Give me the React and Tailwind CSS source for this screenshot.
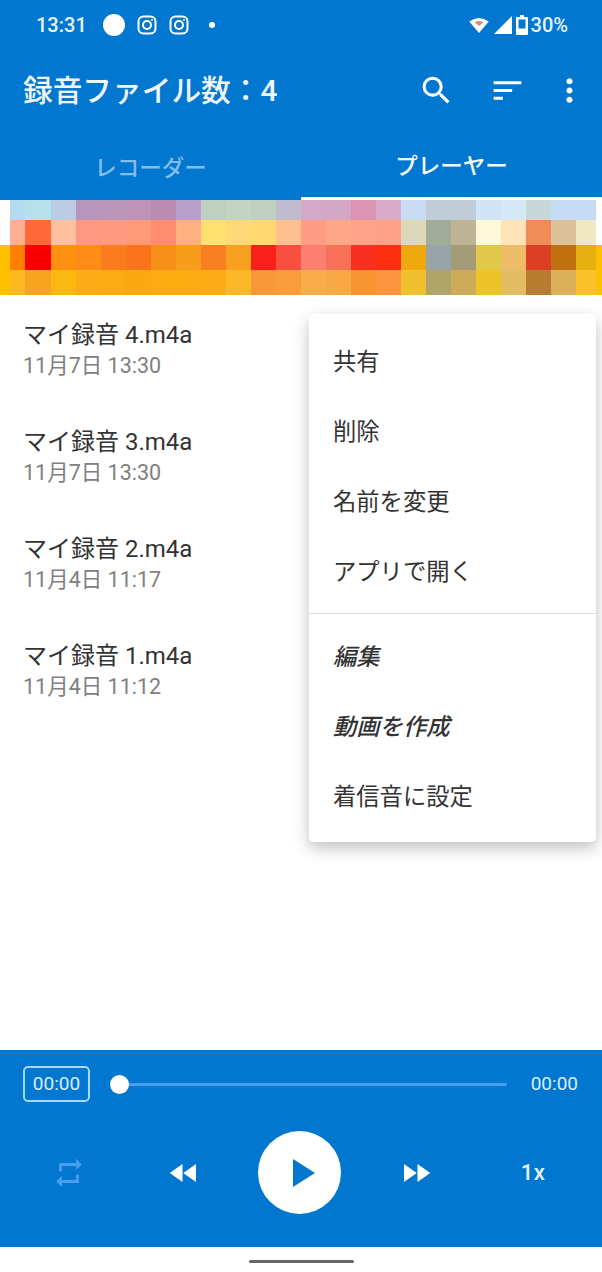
import React from "react";
import { MdSearch, MdSort, MdMoreVert, MdRepeat, MdFastRewind, MdFastForward, MdPlayArrow } from "react-icons/md";

const widths = [10,15,26,25,25,25,25,25,25,25,25,25,25,25,25,25,25,25,25,25,25,25,25,25,20,6];
const rows = [
  ["#ffffff","#b4dcf0","#b6e0ec","#bdcce6","#b795bd","#bb96bb","#bd94b7","#b98bb3","#b8a0c8","#c0d0c0","#c2d4c2","#c0d0be","#c0bcd0","#d4a8c8","#d4a8c4","#dc94b4","#d8acc8","#c8dcf4","#c0ccd8","#c0ccd8","#d0e4f8","#d4e8f8","#c8d8d8","#c4dcf4","#c4dcf4","#ffffff"],
  ["#ffffff","#ffb090","#ff6838","#ffc0a0","#ff9880","#ff9a80","#ff9a78","#ff8c70","#ffb080","#ffe070","#ffd878","#ffd870","#ffc090","#ff9c84","#ffa888","#ffa488","#ffa088","#dcd8b8","#a0ac98","#bcb494","#fff8d8","#ffe4b8","#f08c58","#dcc098","#f0e8c0","#ffffff"],
  ["#ffc000","#ff8000","#f80000","#ff9010","#ff8c18","#fb7c1c","#fb741c","#f79018","#f89c1c","#f88020","#f8a020","#f82018","#f85040","#fc8070","#f87058","#f83020","#fc3010","#f0a810","#98a4a8","#a49c78","#e0c848","#ecbc68","#dc4024","#c07010","#e4b010","#ffc000"],
  ["#ffc000","#fdb820","#f8a420","#fcb810","#fcac14","#fcac10","#fca810","#fcac10","#fcac10","#fcac14","#fcb828","#f8983a","#f89c3c","#f8ac4c","#f8a844","#f89430","#fc9440","#f0c030","#b0a468","#ccac58","#ecc428","#e4bc64","#b87c30","#dcb058","#fcc028","#ffc000"],
];
const rowHeights = [20,25,25,25];

const files = [
  ["マイ録音 4.m4a","11月7日 13:30"],
  ["マイ録音 3.m4a","11月7日 13:30"],
  ["マイ録音 2.m4a","11月4日 11:17"],
  ["マイ録音 1.m4a","11月4日 11:12"],
];

function Insta() {
  return (
    <svg width="20" height="20" viewBox="0 0 20 20" fill="none" stroke="white" strokeWidth="2">
      <rect x="1.5" y="1.5" width="17" height="17" rx="5" />
      <circle cx="10" cy="10" r="4" />
      <circle cx="15" cy="5" r="0.6" fill="white" strokeWidth="0.8" />
    </svg>
  );
}

function MenuItem({ children, italic }) {
  return (
    <div className={"h-[70px] flex items-center pl-6 text-[23.3px] text-[#333333] " + (italic ? "italic font-medium" : "")}>
      {children}
    </div>
  );
}

export default function App() {
  return (
    <div className="relative w-[602px] h-[1272px] bg-white flex flex-col overflow-hidden font-['Roboto','Noto_Sans_CJK_JP',sans-serif]">
      <div className="bg-[#0277cf] h-[200px] shrink-0 flex flex-col text-white">
        <div className="h-[50px] flex items-center pl-9 pr-[34px]">
          <span className="text-[20px] font-medium text-[#e6f2fb]">13:31</span>
          <span className="ml-4 w-[22px] h-[22px] rounded-full bg-white"></span>
          <span className="ml-3"><Insta /></span>
          <span className="ml-3"><Insta /></span>
          <span className="ml-5 w-[6px] h-[6px] rounded-full bg-white"></span>
          <div className="ml-auto flex items-center">
            <svg width="20" height="16" viewBox="0 0 22 18">
              <path d="M11 18 L0 5 Q11 -3 22 5 Z" fill="white" />
              <path d="M11 10 L6 6 Q11 3 16 6 Z" fill="#c98f8f" />
            </svg>
            <svg width="20" height="18" viewBox="0 0 18 18" className="ml-[4px]">
              <path d="M18 0 V18 H0 Z" fill="white" />
            </svg>
            <svg width="12" height="20" viewBox="0 0 12 20" className="ml-[3px]">
              <path d="M4 0 H8 V2 H11 Q12 2 12 3 V19 Q12 20 11 20 H1 Q0 20 0 19 V3 Q0 2 1 2 H4 Z" fill="white" />
              <rect x="2.5" y="4.5" width="7" height="9" fill="#0277cf" />
            </svg>
            <span className="ml-[3px] text-[20px] font-medium text-[#e6f2fb]">30%</span>
          </div>
        </div>
        <div className="h-[80px] flex items-center pl-[23px]">
          <span className="mt-[3px] text-[29.7px] font-medium text-[#eef6fc] whitespace-nowrap">録音ファイル数：4</span>
          <div className="ml-auto flex items-center">
            <MdSearch size={37} className="mr-[34px]" />
            <MdSort size={37} className="mr-[25px]" />
            <MdMoreVert size={37} className="mr-[14px]" />
          </div>
        </div>
        <div className="flex-1 grid grid-cols-2 text-[22.5px] font-medium">
          <div className="flex items-center justify-center pt-[7px] text-[#84bdeb]">レコーダー</div>
          <div className="flex items-center justify-center pt-[7px] border-b-[3px] border-white text-[#f5fafe]">プレーヤー</div>
        </div>
      </div>

      <div className="shrink-0 flex flex-col">
        {rows.map((row, r) => (
          <div key={r} className="flex" style={{ height: rowHeights[r] }}>
            {row.map((c, i) => (
              <div key={i} style={{ width: widths[i], background: c }} />
            ))}
          </div>
        ))}
      </div>

      <div className="flex-1 flex flex-col pt-[22px] pl-[23px]">
        {files.map(([name, date]) => (
          <div key={name} className="h-[107px] flex flex-col">
            <span className="text-[24px] leading-[36px] text-[#333333]">{name}</span>
            <span className="text-[21.5px] leading-[25px] text-[#808080]">{date}</span>
          </div>
        ))}
      </div>

      <div className="bg-[#0277cf] h-[197px] shrink-0 flex flex-col text-white">
        <div className="mt-4 h-9 flex items-center pl-[23px] pr-6">
          <div className="w-[67px] h-9 rounded-[5px] border-2 border-[#a9d8fa] flex items-center justify-center text-[19px] text-[#d8eefc]">00:00</div>
          <div className="relative ml-[21px] w-[396px] h-[3px] bg-[#4a9cec] rounded-full">
            <span className="absolute left-[-1px] top-[-8px] w-[19px] h-[19px] rounded-full bg-white"></span>
          </div>
          <span className="ml-auto text-[19px] text-[#d8eefc]">00:00</span>
        </div>
        <div className="mt-[29px] flex items-center h-[83px]">
          <div className="w-[138px] flex justify-center"><MdRepeat size={34} className="text-[#4a9cec]" /></div>
          <div className="w-[92px] flex justify-center"><MdFastRewind size={36} /></div>
          <div className="w-[83px] h-[83px] ml-[28px] rounded-full bg-white flex items-center justify-center pl-[5px]">
            <MdPlayArrow size={48} className="text-[#0277cf] ml-[-2px]" />
          </div>
          <div className="w-[96px] ml-[27px] flex justify-center"><MdFastForward size={36} /></div>
          <div className="w-[138px] flex justify-center text-[22px] font-medium tracking-wide text-[#e6f2fb]">1x</div>
        </div>
      </div>

      <div className="h-[25px] shrink-0 flex items-center justify-center pt-[3px]">
        <span className="w-[105px] h-[3px] bg-[#666666] rounded-full"></span>
      </div>

      <div className="absolute left-[309px] top-[314px] w-[287px] h-[528px] bg-white rounded-[5px] shadow-[0_6px_16px_rgba(0,0,0,0.25)] flex flex-col pt-[13px]">
        <MenuItem>共有</MenuItem>
        <MenuItem>削除</MenuItem>
        <MenuItem>名前を変更</MenuItem>
        <MenuItem>アプリで開く</MenuItem>
        <div className="h-px bg-[#dddddd] mt-[6px] mb-2"></div>
        <MenuItem italic>編集</MenuItem>
        <MenuItem italic>動画を作成</MenuItem>
        <MenuItem>着信音に設定</MenuItem>
      </div>
    </div>
  );
}
